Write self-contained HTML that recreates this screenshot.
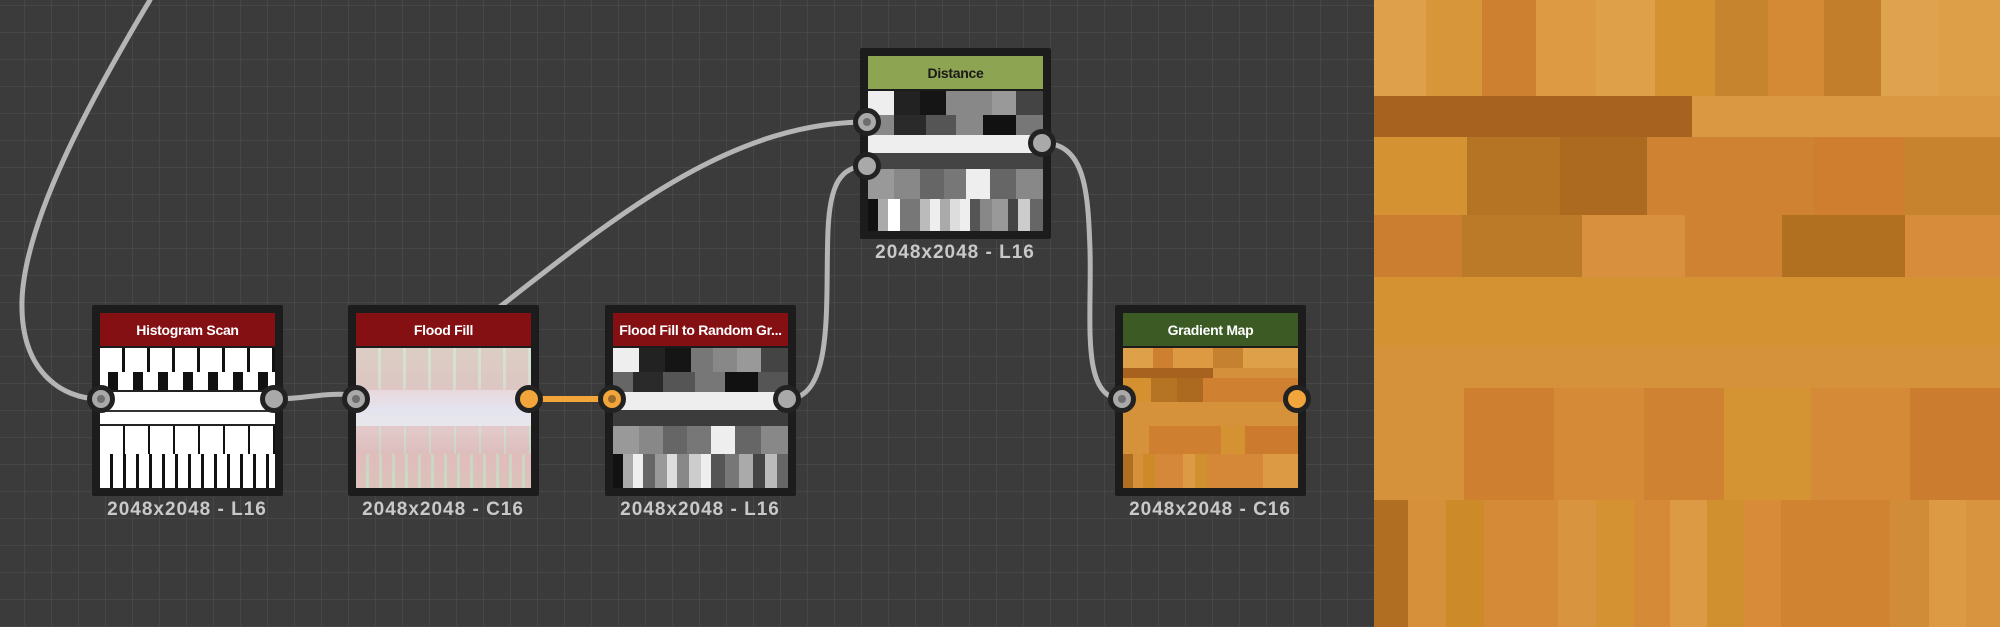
<!DOCTYPE html>
<html><head><meta charset="utf-8"><style>
*{margin:0;padding:0;box-sizing:border-box}
body{width:2000px;height:627px;overflow:hidden;background:#3a3a3a;position:relative;font-family:"Liberation Sans",sans-serif}
.grid{position:absolute;left:0;top:0;width:1375px;height:627px;
background-color:#3b3b3b;
background-image:linear-gradient(#464646 1px,transparent 1px),linear-gradient(90deg,#464646 1px,transparent 1px);
background-size:27px 27px;background-position:-3px 5px}
.node{position:absolute;width:191px;height:191px;background:#1c1c1c;border-radius:2px}
.hdr{position:absolute;left:8px;top:8px;width:175px;height:33px;color:#fff;font-size:14px;font-weight:bold;text-align:center;line-height:34px;white-space:nowrap;overflow:hidden;letter-spacing:-0.3px}
.img{position:absolute;left:8px;top:43px;width:175px;height:140px;overflow:hidden}
.lbl{position:absolute;width:260px;margin-left:-35px;text-align:center;color:#c9c9c9;font-size:19px;font-weight:bold;letter-spacing:1px;white-space:nowrap;font-family:"Liberation Sans",sans-serif}
.port{position:absolute;width:28px;height:28px;border-radius:50%;background:#a9a9a9;border:5px solid #222}
.port.in::after{content:"";position:absolute;left:5px;top:5px;width:8px;height:8px;border-radius:50%;background:#6e6e6e}
.port.o{background:#f2a53a}
.port.o.in::after{background:#9a6a2a}
.r{position:absolute}
</style></head><body>
<div class="grid"></div>
<svg width="1375" height="627" style="position:absolute;left:0;top:0">
<g fill="none" stroke="#b5b5b5" stroke-width="5" stroke-linecap="round">
<path d="M150,0 C90,100 25,220 22,300 C20,370 60,399 101,399"/>
<path d="M274,399 C310,399 320,392 356,395"/>
<path d="M470,330 C600,230 720,122 867,122"/>
<path d="M787,399 C835,399 825,300 828,230 C830,185 840,166 867,166"/>
<path d="M1042,143 C1085,143 1088,190 1090,250 C1092,320 1080,399 1122,399"/>
</g>
<path d="M529,399 L612,399" stroke="#f2a53a" stroke-width="6"/>
</svg>

<div class="node" style="left:92px;top:305px">
<div class="hdr" style="background:#841014">Histogram Scan</div>
<div class="img" style="background:#fff">
<div class="r" style="left:0;top:0;width:175px;height:24px;background:repeating-linear-gradient(90deg,#fff 0 22px,#111 22px 25px)"></div>
<div class="r" style="left:0;top:24px;width:175px;height:18px;background:repeating-linear-gradient(90deg,#fff 0 8px,#111 8px 18px,#fff 18px 25px)"></div>
<div class="r" style="left:0;top:42px;width:175px;height:2px;background:#222"></div>
<div class="r" style="left:0;top:62px;width:175px;height:2px;background:#333"></div>
<div class="r" style="left:0;top:76px;width:175px;height:2px;background:#222"></div>
<div class="r" style="left:0;top:78px;width:175px;height:28px;background:repeating-linear-gradient(90deg,#fff 0 23px,#111 23px 25px)"></div>
<div class="r" style="left:0;top:106px;width:175px;height:34px;background:repeating-linear-gradient(90deg,#fff 0 10px,#111 10px 13px)"></div>
</div></div>
<div class="lbl" style="left:92px;top:499px">2048x2048 - L16</div>

<div class="node" style="left:348px;top:305px">
<div class="hdr" style="background:#841014">Flood Fill</div>
<div class="img" style="background:linear-gradient(#e4e8dc 0,#e8d8dc 30%,#e4e4f0 45%,#e8e8e8 60%,#e0d0d0 75%,#d8e0d0 100%)">
<div class="r" style="left:0;top:0;width:175px;height:42px;background:repeating-linear-gradient(90deg,rgba(210,180,170,.5) 0 22px,rgba(200,220,200,.5) 22px 25px)"></div>
<div class="r" style="left:0;top:78px;width:175px;height:28px;background:repeating-linear-gradient(90deg,rgba(220,170,170,.5) 0 23px,rgba(190,215,190,.6) 23px 25px)"></div>
<div class="r" style="left:0;top:106px;width:175px;height:34px;background:repeating-linear-gradient(90deg,rgba(225,170,170,.55) 0 10px,rgba(190,215,190,.6) 10px 13px)"></div>
</div></div>
<div class="lbl" style="left:348px;top:499px">2048x2048 - C16</div>

<div class="node" style="left:605px;top:305px">
<div class="hdr" style="background:#841014">Flood Fill to Random Gr...</div>
<div class="img" style="background:#eee">
<div class="r" style="left:0;top:0;width:175px;height:24px;background:linear-gradient(90deg,#eee 0 26px,#222 26px 52px,#151515 52px 78px,#777 78px 100px,#888 100px 124px,#999 124px 148px,#444 148px)"></div>
<div class="r" style="left:0;top:24px;width:175px;height:20px;background:linear-gradient(90deg,#666 0 20px,#2a2a2a 20px 50px,#555 50px 82px,#777 82px 112px,#111 112px 145px,#555 145px)"></div>
<div class="r" style="left:0;top:62px;width:175px;height:16px;background:#3c3c3c"></div>
<div class="r" style="left:0;top:78px;width:175px;height:28px;background:linear-gradient(90deg,#999 0 26px,#888 26px 50px,#666 50px 74px,#777 74px 98px,#eee 98px 122px,#666 122px 148px,#888 148px)"></div>
<div class="r" style="left:0;top:106px;width:175px;height:34px;background:linear-gradient(90deg,#111 0 10px,#aaa 10px 20px,#eee 20px 30px,#666 30px 42px,#999 42px 54px,#ddd 54px 64px,#888 64px 76px,#ccc 76px 88px,#eee 88px 98px,#555 98px 112px,#777 112px 126px,#aaa 126px 140px,#444 140px 152px,#bbb 152px 164px,#666 164px)"></div>
</div></div>
<div class="lbl" style="left:605px;top:499px">2048x2048 - L16</div>

<div class="node" style="left:860px;top:48px">
<div class="hdr" style="background:#8da552;color:#1a1a1a">Distance</div>
<div class="img" style="background:#eee">
<div class="r" style="left:0;top:0;width:175px;height:24px;background:linear-gradient(90deg,#eee 0 26px,#222 26px 52px,#151515 52px 78px,#888 78px 124px,#999 124px 148px,#444 148px)"></div>
<div class="r" style="left:0;top:24px;width:175px;height:20px;background:linear-gradient(90deg,#888 0 26px,#2a2a2a 26px 58px,#555 58px 88px,#888 88px 115px,#111 115px 148px,#777 148px)"></div>
<div class="r" style="left:0;top:62px;width:175px;height:16px;background:#444"></div>
<div class="r" style="left:0;top:78px;width:175px;height:30px;background:linear-gradient(90deg,#999 0 26px,#888 26px 52px,#666 52px 76px,#777 76px 98px,#eee 98px 122px,#666 122px 148px,#888 148px)"></div>
<div class="r" style="left:0;top:108px;width:175px;height:32px;background:linear-gradient(90deg,#111 0 10px,#aaa 10px 20px,#fff 20px 32px,#777 32px 52px,#bbb 52px 62px,#eee 62px 72px,#aaa 72px 82px,#ddd 82px 92px,#eee 92px 102px,#555 102px 112px,#888 112px 124px,#999 124px 140px,#444 140px 150px,#ccc 150px 162px,#666 162px)"></div>
</div></div>
<div class="lbl" style="left:860px;top:242px">2048x2048 - L16</div>

<div class="node" style="left:1115px;top:305px">
<div class="hdr" style="background:#3b5a24">Gradient Map</div>
<div class="img" style="background:#d4903a">
<div class="r" style="left:0;top:0;width:175px;height:20px;background:linear-gradient(90deg,#dfa04a 0 30px,#cd8030 30px 50px,#dd9a42 50px 90px,#c58030 90px 120px,#dfa04a 120px)"></div>
<div class="r" style="left:0;top:20px;width:90px;height:10px;background:#a6621e"></div>
<div class="r" style="left:0;top:30px;width:175px;height:24px;background:linear-gradient(90deg,#d59030 0 28px,#b47424 28px 54px,#ac6a20 54px 80px,#cf8030 80px)"></div>
<div class="r" style="left:0;top:54px;width:175px;height:24px;background:#d6923a"></div>
<div class="r" style="left:0;top:78px;width:175px;height:28px;background:linear-gradient(90deg,#d6923a 0 26px,#ce8030 26px 98px,#d49232 98px 122px,#cc7a2e 122px)"></div>
<div class="r" style="left:0;top:106px;width:175px;height:34px;background:linear-gradient(90deg,#b06e22 0 10px,#d6903a 10px 20px,#cc8a28 20px 32px,#d6883a 32px 60px,#dc9a44 60px 72px,#d09030 72px 84px,#d48838 84px 140px,#dc9a44 140px)"></div>
</div></div>
<div class="lbl" style="left:1115px;top:499px">2048x2048 - C16</div>

<div class="port in" style="left:87px;top:385px"></div>
<div class="port" style="left:260px;top:385px"></div>
<div class="port in" style="left:342px;top:385px"></div>
<div class="port o" style="left:515px;top:385px"></div>
<div class="port o in" style="left:598px;top:385px"></div>
<div class="port" style="left:773px;top:385px"></div>
<div class="port in" style="left:853px;top:108px"></div>
<div class="port" style="left:853px;top:152px"></div>
<div class="port" style="left:1028px;top:129px"></div>
<div class="port in" style="left:1108px;top:385px"></div>
<div class="port o" style="left:1283px;top:385px"></div>

<div style="position:absolute;left:1374px;top:0;width:626px;height:627px;background:#d6913a;overflow:hidden">
<div class="r" style="left:0;top:0;width:626px;height:96px;background:linear-gradient(90deg,#dfa04c 0 52px,#d8963a 52px 108px,#cd8030 108px 162px,#dd9a42 162px 222px,#dfa04a 222px 281px,#d59230 281px 341px,#c7842f 341px 394px,#d48a34 394px 450px,#c27e2a 450px 507px,#dfa24e 507px 564px,#dda048 564px)"></div>
<div class="r" style="left:0;top:96px;width:318px;height:41px;background:#a6621e"></div>
<div class="r" style="left:318px;top:96px;width:308px;height:41px;background:#da9842"></div>
<div class="r" style="left:0;top:137px;width:626px;height:78px;background:linear-gradient(90deg,#d59232 0 93px,#b47424 93px 186px,#ac6a20 186px 273px,#cf8232 273px 440px,#ce7e2e 440px 530px,#c8832e 530px)"></div>
<div class="r" style="left:0;top:215px;width:626px;height:62px;background:linear-gradient(90deg,#cc7e30 0 88px,#bb7a28 88px 208px,#d8903e 208px 311px,#cf8232 311px 408px,#b07020 408px 531px,#d68c3a 531px)"></div>
<div class="r" style="left:0;top:277px;width:626px;height:68px;background:#d59232"></div>
<div class="r" style="left:0;top:345px;width:626px;height:43px;background:#d6923a"></div>
<div class="r" style="left:0;top:388px;width:626px;height:112px;background:linear-gradient(90deg,#d6923a 0 90px,#ce8030 90px 180px,#d48a36 180px 270px,#cf8232 270px 350px,#d49434 350px 437px,#d48a36 437px 536px,#cc7c2e 536px)"></div>
<div class="r" style="left:0;top:500px;width:626px;height:127px;background:linear-gradient(90deg,#b06e22 0 34px,#d6903a 34px 72px,#cc8a28 72px 110px,#d48a36 110px 184px,#d8943e 184px 222px,#d49232 222px 260px,#d48a36 260px 296px,#dc9a44 296px 333px,#d09030 333px 370px,#d88c3a 370px 407px,#d08432 407px 516px,#d08c38 516px 555px,#dc9a44 555px 592px,#d8943e 592px)"></div>
</div>
</body></html>
